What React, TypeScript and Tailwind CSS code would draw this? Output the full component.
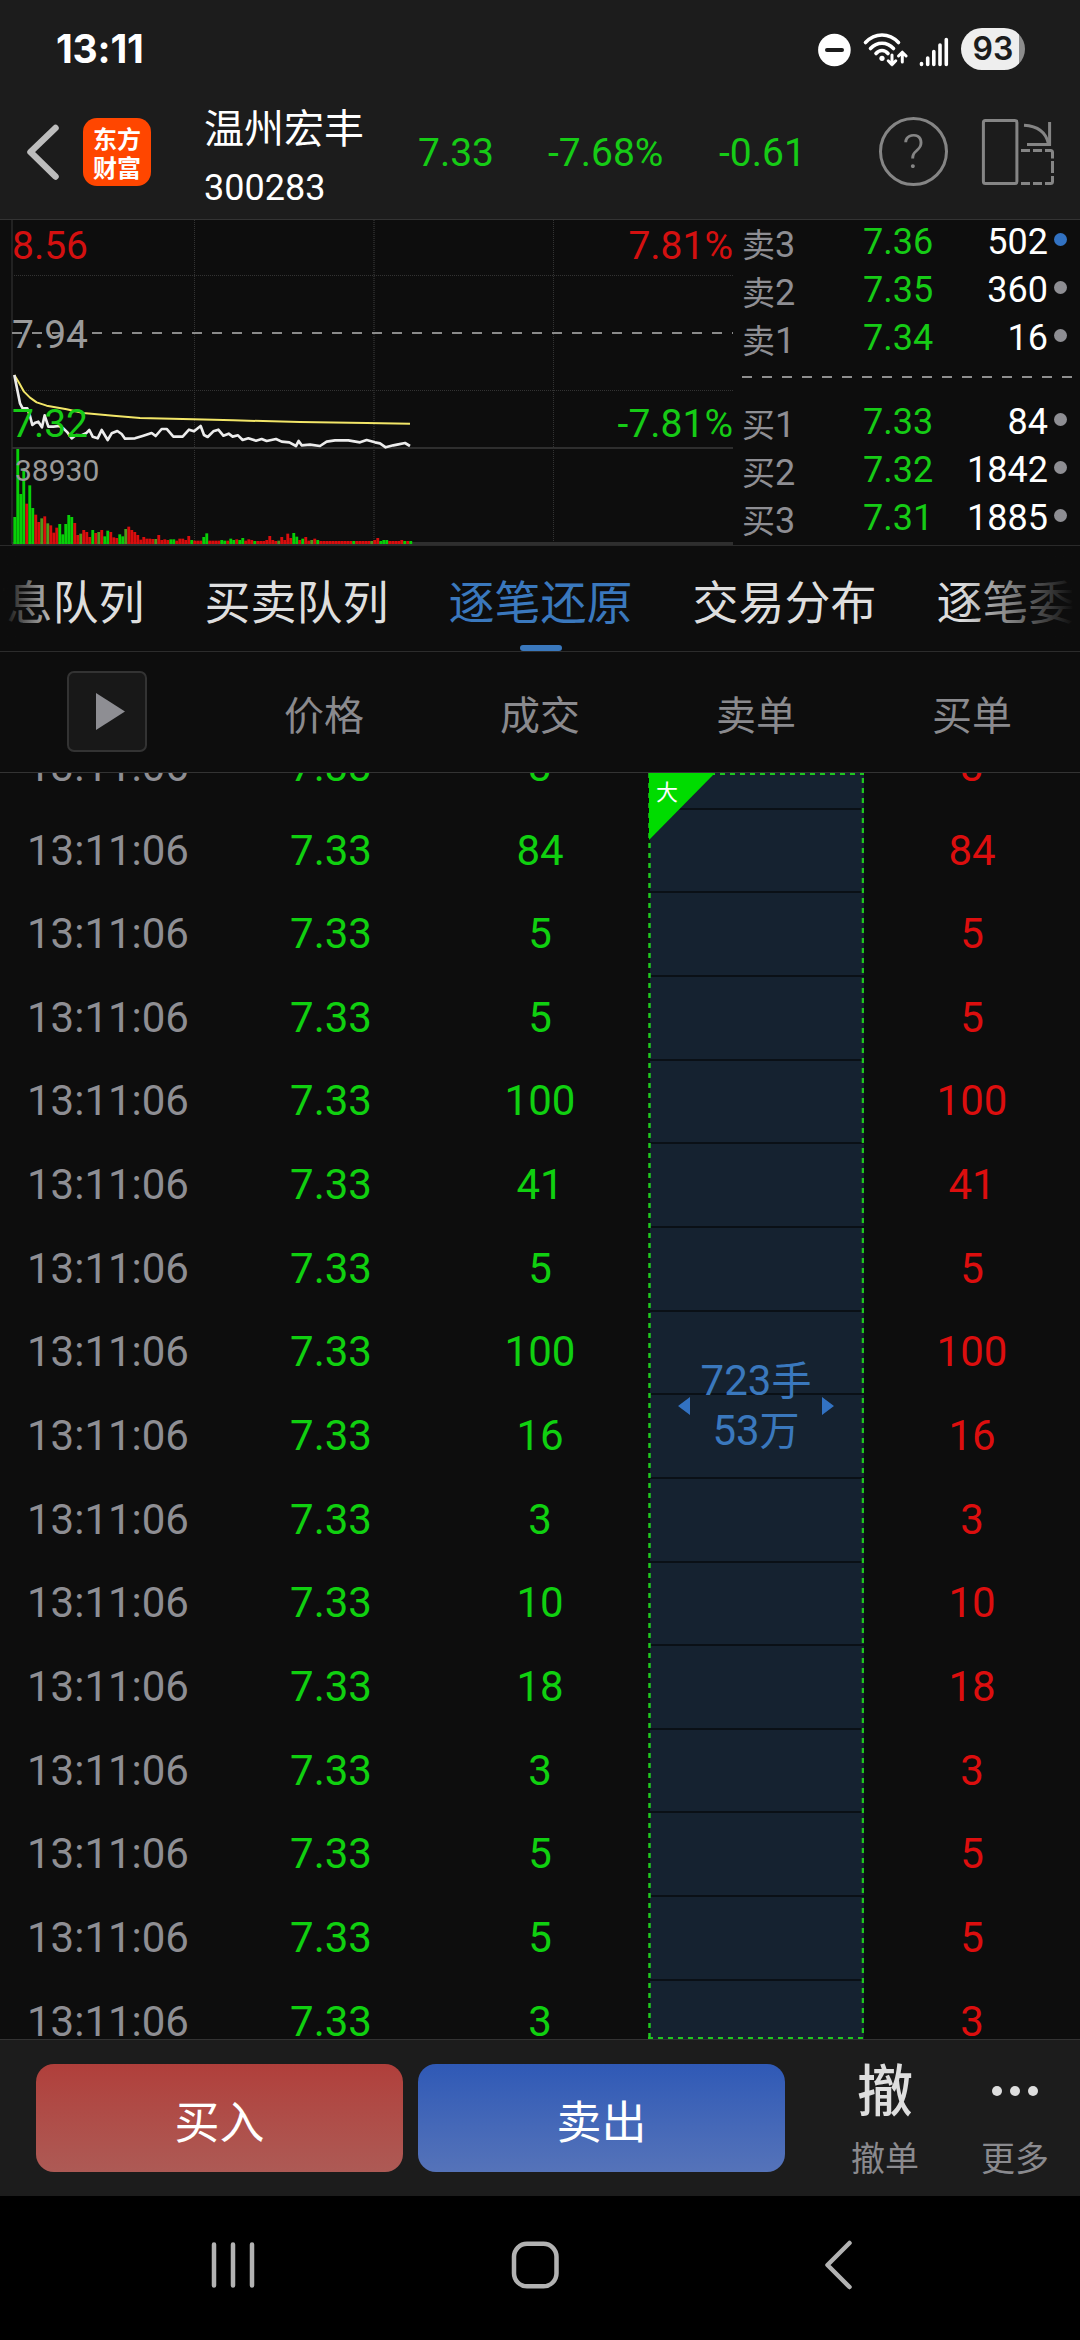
import React from "react";

/* ---------- Intraday chart data ---------- */
// Traces are plotted on a canvas three times finer than the panel.
const PRICE =
  "43,495 52,540 60,580 68,595 82,595 90,618 97,645 106,638 115,635 126,652 134,616 145,650 160,650 178,648 190,655 203,668 215,685 228,675 245,676 258,670 268,660 278,680 293,685 305,660 323,690 335,670 352,663 365,672 375,686 405,685 430,677 455,669 467,678 485,657 500,657 520,680 548,680 567,659 582,664 602,648 612,675 623,681 640,664 655,659 670,677 686,671 698,680 714,676 728,690 745,685 768,692 785,687 800,693 828,687 845,695 868,697 888,708 896,693 905,706 930,704 960,708 980,695 1005,691 1045,691 1080,697 1100,690 1125,697 1140,700 1157,712 1180,706 1195,703 1215,699 1230,708";
const AVERAGE =
  "43,495 58,520 72,545 90,563 110,577 140,587 200,598 250,609 340,617 420,624 580,628 700,631 900,636 1100,639 1230,641";

const VOLUMES: [number, number][] = (
  "81g 285g 150g 227g 121r 176g 108g 88r 66r 77o 83r 62o 56r 34r 49r 60g 29g 60g 87g 81g 63r 27r 31o 42r 36r 21r 42g 33r 36o 42r 23g 40g 36r 20r 18r 29g 23g 45o 52r 42r 36r 27r 13r 21r 16r 16r 15r 15o 27r 12r 14r 12r 14g 14g 10r 16r 16r 12r 24r 12g 10r 10r 10r 21g 32g 10r 10r 10r 10r 12g 10g 10r 16g 12g 14r 12g 18g 10r 14r 12r 9g 9r 9r 9r 12r 24r 12r 9r 10o 21r 12r 31r 18r 33g 22g 12r 16g 21r 10r 12o 16r 12g 9r 9r 9r 9r 9r 9r 9r 9r 9r 9r 9r 9g 9r 9r 9r 9r 9r 9o 12r 18r 9g 12g 12g 9r 9r 9r 9r 12r 9g 9r 9g"
)
  .split(" ")
  .map((v) => [parseInt(v), "rgo".indexOf(v.slice(-1))]);
const BAR_FILL = ["#d90d0d", "#08cf08", "#4f9a1c"];

function Chart() {
  return (
    <div className="relative h-[325px] w-[735px] shrink-0">
      <svg className="block h-[325px] w-[735px]" viewBox="0 0 735 325">
        <g fill="none" stroke="#333" strokeWidth="1" strokeDasharray="1 1">
          <path d="M12 55.5H733M12 170.5H733M194.5 0V323M553.5 0V323" />
          <path d="M374 0V323" strokeWidth="2" stroke="#262626" />
        </g>
        <path d="M12 0V324" stroke="#222" strokeWidth="2" />
        <path d="M12 228H733" stroke="#2e2e2e" strokeWidth="2" />
        <path d="M12 323.5H733" stroke="#2e2e2e" strokeWidth="3" />
        <path d="M12 113H733" stroke="#8a8a8a" strokeWidth="2" strokeDasharray="10 10" />
        <g transform="translate(0 -10) scale(0.33333)">
          {VOLUMES.map(([h, c], i) => (
            <rect key={i} x={40 + 9 * i} y={1002 - h} width="8.6" height={h} fill={BAR_FILL[c]} />
          ))}
          <polyline points={AVERAGE} fill="none" stroke="#f2e668" strokeWidth="6" strokeLinejoin="round" />
          <polyline points={PRICE} fill="none" stroke="#ececec" strokeWidth="8" strokeLinejoin="round" />
        </g>
      </svg>
      <div className="absolute inset-0 text-[39px] leading-[40px]">
        <span className="absolute left-[12px] top-[6px] text-[#d41010]">8.56</span>
        <span className="absolute left-[12px] top-[95px] text-[#9a9a9a]">7.94</span>
        <span className="absolute left-[12px] top-[184px] text-[#16cb16]">7.32</span>
        <span className="absolute left-[15px] top-[231px] text-[30px] text-[#9a9a9a]">38930</span>
        <span className="absolute right-[2px] top-[6px] text-[#d41010]">7.81%</span>
        <span className="absolute right-[2px] top-[184px] text-[#16cb16]">-7.81%</span>
      </div>
    </div>
  );
}

/* ---------- Order book ---------- */
type Quote = { side: string; level: number; price: string; qty: number; active?: boolean };
const ASKS: Quote[] = [
  { side: "卖", level: 3, price: "7.36", qty: 502, active: true },
  { side: "卖", level: 2, price: "7.35", qty: 360 },
  { side: "卖", level: 1, price: "7.34", qty: 16 },
];
const BIDS: Quote[] = [
  { side: "买", level: 1, price: "7.33", qty: 84 },
  { side: "买", level: 2, price: "7.32", qty: 1842 },
  { side: "买", level: 3, price: "7.31", qty: 1885 },
];

function QuoteRow({ q }: { q: Quote }) {
  return (
    <div className="flex h-12 items-center text-[36px] leading-[48px]">
      <span className="w-[121px] pt-[6px] text-[#8e8e93]">
        <span className="text-[33px]">{q.side}</span>
        {q.level}
      </span>
      <span className="w-[90px] text-[#16cb16]">{q.price}</span>
      <span className="flex-1 text-right text-white">{q.qty}</span>
      <span className={"mb-[5px] ml-[6px] mr-[13px] size-[13px] rounded-full " + (q.active ? "bg-[#3272c2]" : "bg-[#8e8e93]")} />
    </div>
  );
}

function OrderBook() {
  return (
    <div className="-mt-[2px] flex flex-1 flex-col pl-[7px]">
      {ASKS.map((q) => <QuoteRow key={q.price} q={q} />)}
      <div className="mb-[20px] mr-[8px] mt-[14px] h-[2px] bg-[repeating-linear-gradient(90deg,#8e8e8e_0_10px,transparent_10px_20px)]" />
      {BIDS.map((q) => <QuoteRow key={q.price} q={q} />)}
    </div>
  );
}

/* ---------- Status bar ---------- */
function StatusBar() {
  return (
    <div className="flex h-[90px] items-start justify-between pl-[56px] pr-[55px]">
      <span className="mt-[24px] font-['Inter'] text-[39px] font-bold leading-[50px] tracking-[-0.2px] text-white">13:11</span>
      <div className="mt-[28px] flex h-[42px] items-center">
        <svg className="h-[42px] w-[144px]" viewBox="816 28 144 42" fill="none">
          <circle cx="833.4" cy="50" r="16.3" fill="#fff" />
          <path d="M826 50H841" stroke="#1c1c1c" strokeWidth="4" strokeLinecap="round" />
          <g stroke="#fff" strokeLinecap="round" strokeWidth="3.6">
            <path d="M864.5 42.5C874 32.5 888 32.5 897.5 42.5" />
            <path d="M869.5 48.5C876 41.5 886 41.5 892.5 48.5" />
            <path d="M875 53.5C878.5 49.5 883.5 49.5 887 53.5" />
          </g>
          <circle cx="881" cy="58.3" r="2.6" fill="#fff" />
          <g stroke="#fff" strokeWidth="3" strokeLinecap="round" strokeLinejoin="round">
            <path d="M891 55V64.5M887.2 60.8L891 64.6L894.8 60.8" />
            <path d="M901.3 62V52.5M897.5 56L901.3 52.2L905.1 56" />
          </g>
          <g stroke="#fff" strokeWidth="3.6" strokeLinecap="round">
            <path d="M920.5 63.5V64.5M926.7 58V64.5M932.8 51.5V64.5M939 45V64.5M945.3 39.5V64.5" />
          </g>
        </svg>
        <div className="flex h-[42px] w-[64px] items-center justify-center rounded-full bg-[linear-gradient(90deg,#eeeeee_58px,#8c8c8c_58px)] font-['Inter'] text-[32px] font-semibold leading-none text-[#1c1c1c]">
          93
        </div>
      </div>
    </div>
  );
}

/* ---------- Header ---------- */
function Header() {
  return (
    <div className="flex h-[129px] items-center pb-[6px]">
      <svg className="ml-[26px] h-[58px] w-[34px] shrink-0" viewBox="26 123 34 58" fill="none">
        <path d="M55.5 128L30.5 152L55.5 176.5" stroke="#bdbdbd" strokeWidth="6.5" strokeLinecap="round" strokeLinejoin="round" />
      </svg>
      <div className="ml-[23px] flex size-[68px] shrink-0 flex-col items-center justify-center rounded-[14px] bg-[#ff4600] font-['Noto_Sans_CJK_SC'] text-[24px] font-bold leading-[29px] text-white">
        <span>东方</span>
        <span>财富</span>
      </div>
      <div className="ml-[53px] mt-[16px] flex w-[214px] flex-col text-white">
        <span className="text-[40px] leading-[48px]">温州宏丰</span>
        <span className="mt-[8px] text-[36px] leading-[52px]">300283</span>
      </div>
      <div className="mt-[3px] flex text-[39px] leading-[48px] text-[#16cb16]">
        <span className="w-[130px]">7.33</span>
        <span className="w-[171px]">-7.68%</span>
        <span className="w-[160px]">-0.61</span>
      </div>
      <div className="flex size-[69px] shrink-0 items-center justify-center rounded-full border-[3px] border-[#858585] text-[49px] font-light leading-none text-[#858585]">
        ?
      </div>
      <svg className="ml-[32px] h-[70px] w-[76px]" viewBox="980 116 76 70" fill="none" stroke="#858585" strokeWidth="3">
        <rect x="983.4" y="119.4" width="33.5" height="63.2" rx="2" />
        <path d="M1024 124.3C1037 125 1046 131 1048.5 143" />
        <path d="M1049.6 121V144.8M1027 143.4H1051" />
        <path d="M1021 149.5H1030M1033 149.5H1042M1045 149.5H1050.500Q1052.500 149.500 1052.500 151.500V157.500M1052.500 160V172M1052.500 175V180.500Q1052.500 182.500 1050.500 182.500H1045M1042 182.500H1033M1030 182.500H1021" />
      </svg>
    </div>
  );
}

/* ---------- Tabs ---------- */
const TABS = ["信息队列", "买卖队列", "逐笔还原", "交易分布", "逐笔委托"];

function Tabs() {
  return (
    <div className="relative h-[106px] overflow-hidden border-b border-[#2c2c2c]">
      <div className="-ml-[39.500px] flex h-full gap-[60px]">
        {TABS.map((t) => {
          const on = t === "逐笔还原";
          return (
            <div key={t} className={"flex w-[184px] shrink-0 flex-col items-center text-[46px] " + (on ? "text-[#3a78bd]" : "text-[#dedede]")}>
              <span className="mt-[27px] whitespace-nowrap leading-[60px]">{t}</span>
              {on && <span className="mt-auto h-[6px] w-[42px] rounded-full bg-[#3a78bd]" />}
            </div>
          );
        })}
      </div>
      <div className="absolute left-0 top-0 h-[100px] w-[60px] bg-linear-to-r from-[#0d0d0d] from-5% to-transparent" />
      <div className="absolute right-0 top-0 h-[100px] w-[120px] bg-linear-to-l from-[#0d0d0d] from-5% to-transparent" />
    </div>
  );
}

/* ---------- Trades ---------- */
const TRADES = [3, 84, 5, 5, 100, 41, 5, 100, 16, 3, 10, 18, 3, 5, 5, 3];

function TableHead() {
  return (
    <div className="grid h-[121px] grid-cols-5 items-center border-b border-[#333] text-center text-[40px] leading-[60px] text-[#8a8a8e]">
      <div className="flex justify-center pb-[2px] pr-[2px]">
        <div className="flex h-[81px] w-[80px] items-center justify-center rounded-[7px] border-2 border-[#333] bg-[#181818]">
          <svg className="ml-[6px] h-[37px] w-[29px]" viewBox="0 0 29 37">
            <path d="M0 0L29 18.500L0 37Z" fill="#8e8e93" />
          </svg>
        </div>
      </div>
      <span className="pt-[10px]">价格</span>
      <span className="pt-[10px]">成交</span>
      <span className="pt-[10px]">卖单</span>
      <span className="pt-[10px]">买单</span>
    </div>
  );
}

function Trades() {
  return (
    <div className="relative h-[1266px] overflow-hidden">
      <div className="-mt-[47.900px] flex flex-col">
        {TRADES.map((v, i) => (
          <div key={i} className="grid h-[83.650px] grid-cols-5 items-center text-center text-[42px] leading-[50px]">
            <span className="text-[#8e8e93]">13:11:06</span>
            <span className="pl-[14px] text-[#10d010]">7.33</span>
            <span className="text-[#10d010]">{v}</span>
            <span className="ml-[2px] h-full translate-y-px border-b-2 border-[#0a1016] bg-[#152230]" />
            <span className="text-[#dc0e0e]">{v}</span>
          </div>
        ))}
      </div>
      <div className="absolute left-[648px] top-0 flex h-[1266px] w-[216px] items-center justify-center">
        <svg className="absolute inset-0 h-full w-full" viewBox="0 0 216 1266" fill="none">
          <path d="M1.500 0V1264" stroke="#1fc71f" strokeWidth="2.500" strokeDasharray="5 5" />
          <path d="M215 5V1264" stroke="#1fc71f" strokeWidth="2.500" strokeDasharray="5 5" />
          <path d="M2 1H216M0 1265H216" stroke="#1fc71f" strokeWidth="2" strokeDasharray="5 5" />
          <path d="M1 0H67L1 67Z" fill="#00dc00" />
          <path d="M42 624V642L30 633ZM174 624V642L186 633Z" fill="#3272c2" />
        </svg>
        <span className="absolute left-[8px] top-[5px] text-[22px] leading-[30px] text-white">大</span>
        <div className="relative text-center text-[42px] leading-[49px] text-[#3a78bd]">
          <div>723<span className="text-[40px]">手</span></div>
          <div>53<span className="text-[40px]">万</span></div>
        </div>
      </div>
    </div>
  );
}

/* ---------- Footer ---------- */
function ActionBar() {
  return (
    <div className="flex h-[157px] border-t border-[#333] bg-[#1c1c1c] pl-[36px] pt-[24px]">
      <button className="h-[108px] w-[367px] rounded-[18px] bg-linear-to-b from-[#b03f3b] to-[#ad5a55] pt-[12px] text-[45px] text-white">买入</button>
      <button className="ml-[15px] h-[108px] w-[367px] rounded-[18px] bg-linear-to-b from-[#2f59b6] to-[#5573b9] pt-[12px] text-[45px] text-white">卖出</button>
      <div className="ml-[40px] flex w-[120px] flex-col items-center">
        <span className="text-[56px] font-medium leading-[56px] text-[#dedede]">撤</span>
        <span className="mt-[19px] text-[34px] leading-[40px] text-[#8a8a8e]">撤单</span>
      </div>
      <div className="ml-[10px] flex w-[120px] flex-col items-center">
        <span className="flex h-[54px] items-center gap-[8px]">
          <i className="size-[10px] rounded-full bg-[#dedede]" />
          <i className="size-[10px] rounded-full bg-[#dedede]" />
          <i className="size-[10px] rounded-full bg-[#dedede]" />
        </span>
        <span className="mt-[21px] text-[34px] leading-[40px] text-[#8a8a8e]">更多</span>
      </div>
    </div>
  );
}

function NavBar() {
  return (
    <div className="flex h-[144px] bg-black pl-[210px] pt-[44px]">
      <svg className="h-[50px] w-[646px]" viewBox="210 2240 646 50" fill="none" stroke="#b2b2b2" strokeWidth="4.500" strokeLinecap="round" strokeLinejoin="round">
        <path d="M214 2244.500V2285.500M233 2244.500V2285.500M252 2244.500V2285.500" />
        <rect x="514" y="2243.800" width="42.500" height="42.500" rx="13" />
        <path d="M849.500 2243L827.500 2265L849.500 2287" />
      </svg>
    </div>
  );
}

export default function App() {
  return (
    <div className="flex h-[2340px] w-[1080px] flex-col overflow-hidden bg-[#0d0d0d] font-['Roboto','Noto_Sans_CJK_SC',sans-serif]">
      <div className="h-[220px] border-b border-[#333] bg-[#1c1c1c]">
        <StatusBar />
        <Header />
      </div>
      <div className="flex h-[326px] border-b border-[#2a2a2a]">
        <Chart />
        <OrderBook />
      </div>
      <Tabs />
      <TableHead />
      <Trades />
      <ActionBar />
      <NavBar />
    </div>
  );
}
